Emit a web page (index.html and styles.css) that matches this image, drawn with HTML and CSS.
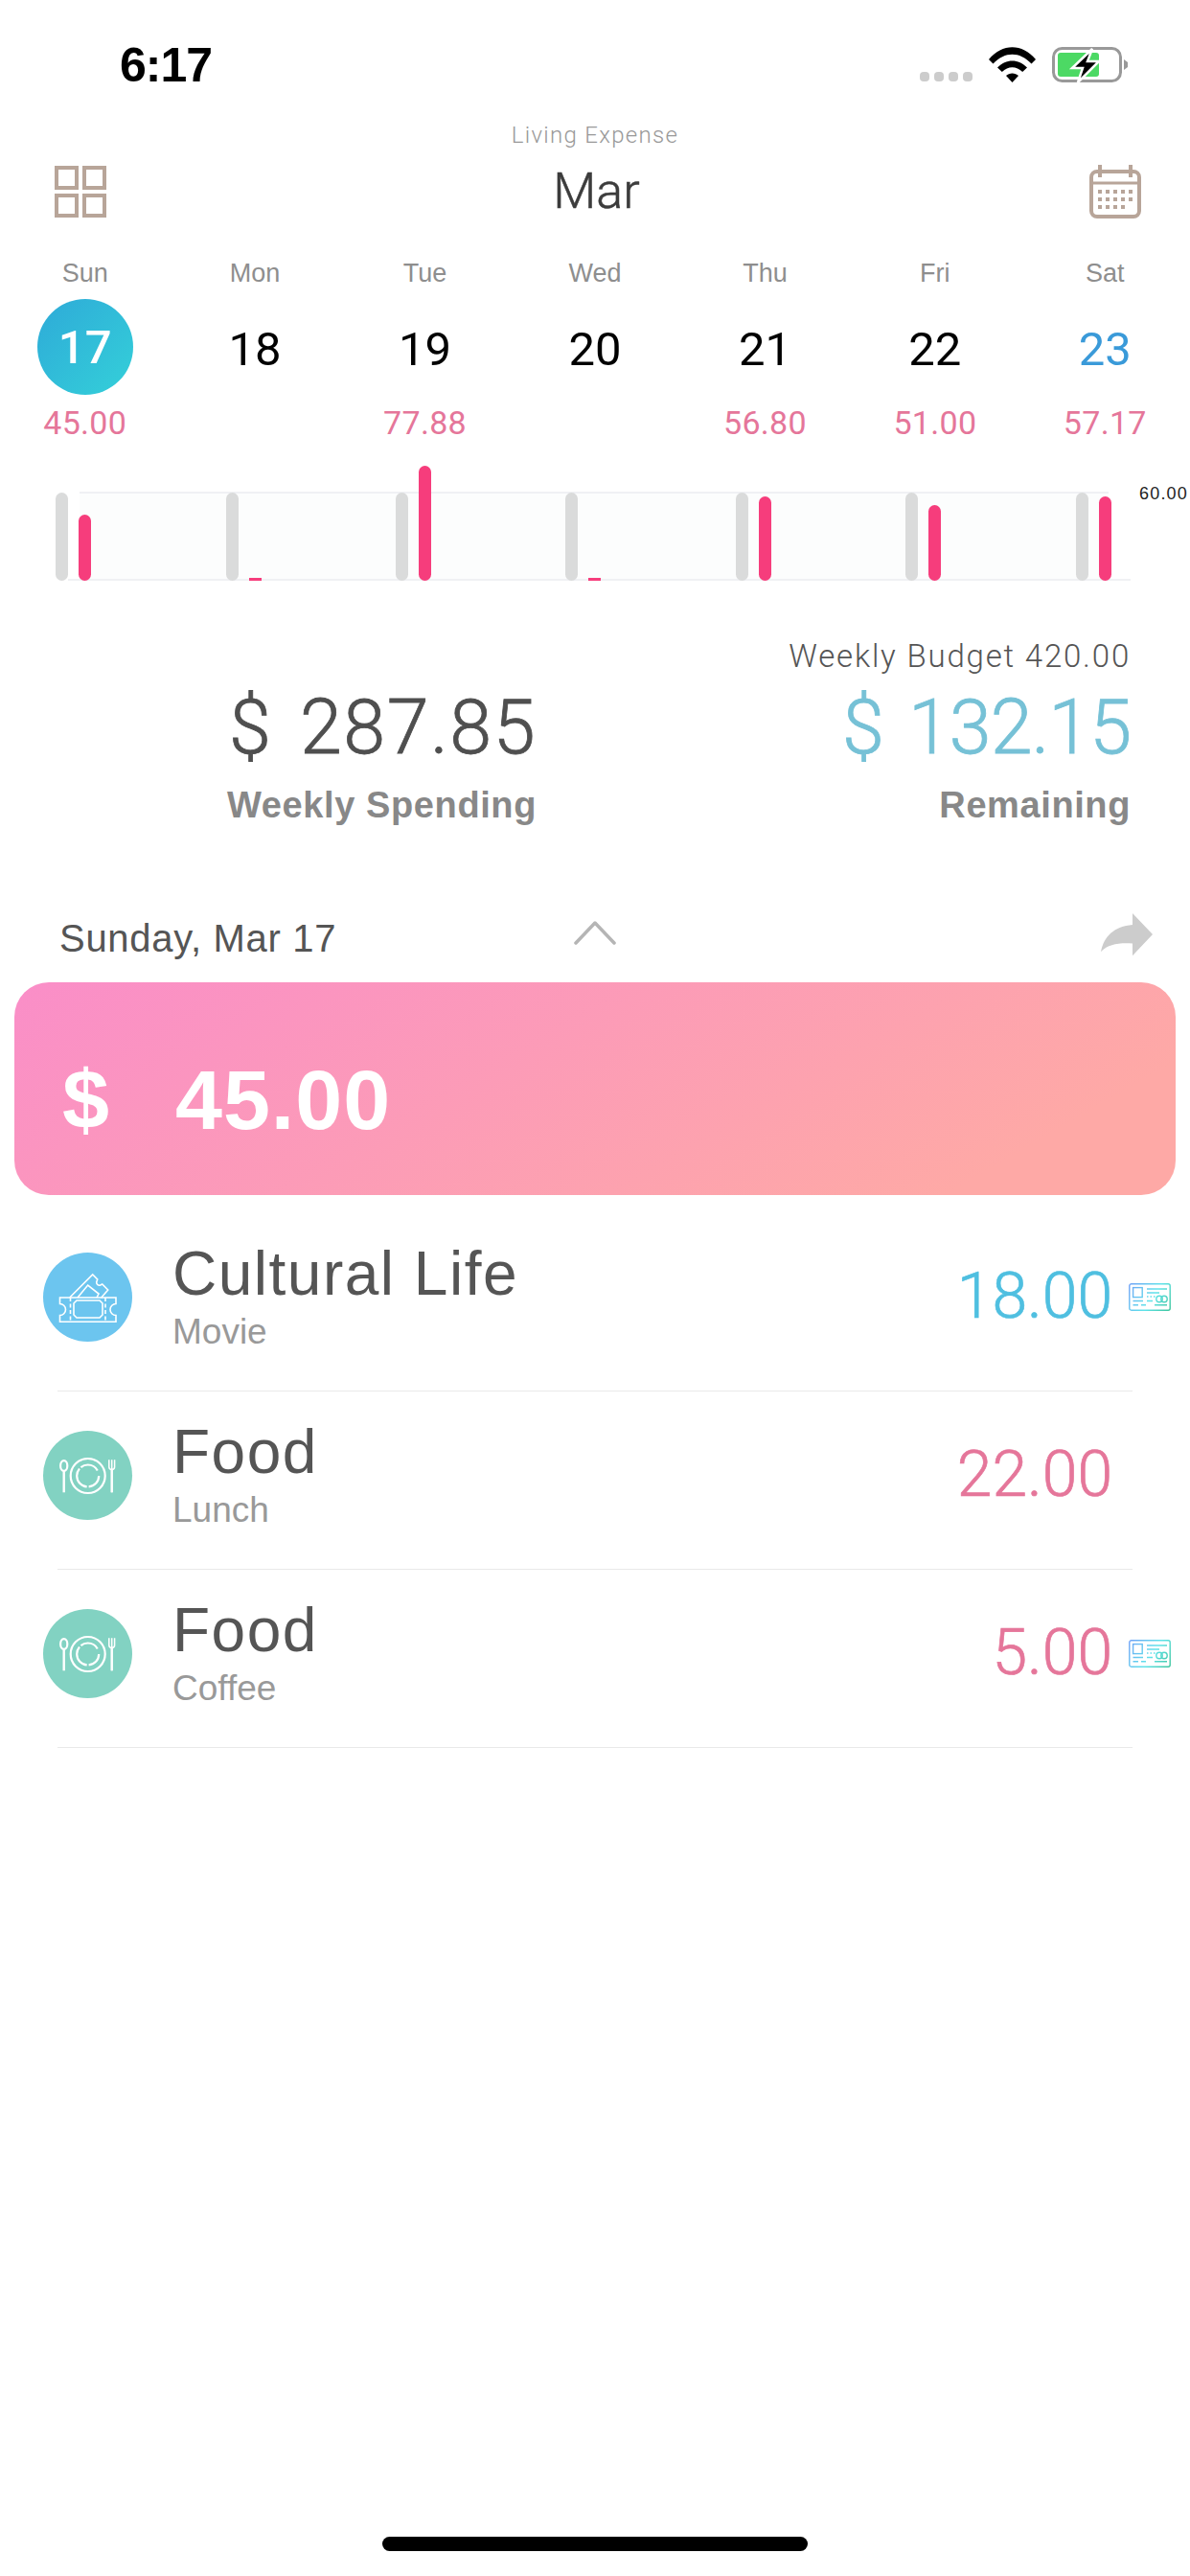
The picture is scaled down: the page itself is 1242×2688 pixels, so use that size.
FILE: index.html
```html
<!DOCTYPE html>
<html lang="en">
<head>
    <meta charset="UTF-8">
    <meta name="viewport" content="width=device-width, initial-scale=1.0">
    <title>Living Expense</title>
    <link rel="stylesheet" href="styles.css">
</head>
<body>
    <svg class="defs" width="0" height="0">
        <defs>
            <linearGradient id="cardGrad" gradientUnits="userSpaceOnUse" x1="0" y1="0" x2="44" y2="29">
                <stop offset="0" stop-color="#6f9ff8"/>
                <stop offset="0.55" stop-color="#5fe3ea"/>
                <stop offset="1" stop-color="#3cc49a"/>
            </linearGradient>
            <g id="payCard" fill="none" stroke="url(#cardGrad)" stroke-width="1.4">
                <rect x="0.8" y="0.8" width="42.4" height="27.4" rx="2"/>
                <rect x="4.6" y="4.6" width="9.6" height="10"/>
                <path d="M19 6h21M19 10h13M19 14h1.5M22.5 14h1.5M26 14h1.5M4.500 18.500h10.500M19 18.500h6M4.500 22.700h5.500M13 22.700h5M27 22.700h13"/>
                <circle cx="32" cy="16.500" r="3.200"/>
                <circle cx="37" cy="16.500" r="3.200"/>
            </g>
            <g id="plate" fill="none" stroke="#fff" stroke-width="2.200">
                <ellipse cx="21.700" cy="36.500" rx="3.600" ry="5.400"/>
                <path d="M21.700 42v22.300" stroke-width="2.400"/>
                <circle cx="46.700" cy="47" r="18"/>
                <circle cx="46.700" cy="47" r="11.500" stroke-dasharray="17 2 25 2 20 6"/>
                <path d="M68.800 30.300v7.500q0 2.700 2.900 2.700t2.900-2.700v-7.500M71.700 30.300v34" stroke-width="1.500"/>
                <path d="M71.700 40v24.300" stroke-width="2.400"/>
            </g>
        </defs>
    </svg>

    <div class="status">
        <span class="time">6:17</span>
        <div class="status-icons">
            <div class="signal"><i></i><i></i><i></i><i></i></div>
            <svg class="wifi" width="49" height="37" viewBox="0 0 49 37">
                <path d="M0 13C14-4 35-4 49 13l-4.500 4.500C32 4.500 17 4.500 4.500 17.500z"/>
                <path d="M9 21.500c9-9.500 22-9.500 31 0l-4.800 4.500c-6.500-6.500-15-6.500-21.400 0z"/>
                <path d="M18 30c3.500-3.500 9.500-3.500 13 0l-6.500 7z"/>
            </svg>
            <svg class="battery" width="79" height="37" viewBox="0 0 79 37">
                <rect x="1.500" y="1.500" width="70" height="34" rx="9" fill="none" stroke="#999" stroke-width="3"/>
                <path d="M75 13l4 3v5l-4 3z" fill="#999"/>
                <rect x="6" y="6" width="43" height="25" rx="3" fill="#4cd964"/>
                <path d="M42 2L21 22h11l-5 15 22-22H37z" fill="#000" stroke="#fff" stroke-width="2.500"/>
            </svg>
        </div>
    </div>

    <div class="book-name">Living Expense</div>
    <div class="header">
        <svg width="54" height="54" viewBox="0 0 54 54" fill="none" stroke="#b8a599" stroke-width="4">
            <rect x="2" y="2" width="21" height="21"/>
            <rect x="31" y="2" width="21" height="21"/>
            <rect x="2" y="31" width="21" height="21"/>
            <rect x="31" y="31" width="21" height="21"/>
        </svg>
        <span class="month">Mar</span>
        <svg width="54" height="56" viewBox="0 0 54 56">
            <rect x="2" y="7" width="50" height="47" rx="6" fill="none" stroke="#b8a599" stroke-width="4"/>
            <path d="M2 19h50" stroke="#b8a599" stroke-width="3"/>
            <path d="M11 0v13M43 0v13" stroke="#b8a599" stroke-width="4"/>
            <path d="M9 26h4v4H9zM17 26h4v4h-4zM25 26h4v4h-4zM33 26h4v4h-4zM41 26h4v4h-4zM9 34h4v4H9zM17 34h4v4h-4zM25 34h4v4h-4zM33 34h4v4h-4zM41 34h4v4h-4zM9 42h4v4H9zM17 42h4v4h-4zM25 42h4v4h-4zM33 42h4v4h-4z" fill="#b8a599"/>
        </svg>
    </div>

    <div class="week">
        <div class="day">
            <span class="day-name">Sun</span>
            <span class="day-num today">17</span>
            <span class="day-amount">45.00</span>
        </div>
        <div class="day">
            <span class="day-name">Mon</span>
            <span class="day-num">18</span>
            <span class="day-amount"></span>
        </div>
        <div class="day">
            <span class="day-name">Tue</span>
            <span class="day-num">19</span>
            <span class="day-amount">77.88</span>
        </div>
        <div class="day">
            <span class="day-name">Wed</span>
            <span class="day-num">20</span>
            <span class="day-amount"></span>
        </div>
        <div class="day">
            <span class="day-name">Thu</span>
            <span class="day-num">21</span>
            <span class="day-amount">56.80</span>
        </div>
        <div class="day">
            <span class="day-name">Fri</span>
            <span class="day-num">22</span>
            <span class="day-amount">51.00</span>
        </div>
        <div class="day">
            <span class="day-name">Sat</span>
            <span class="day-num weekend">23</span>
            <span class="day-amount">57.17</span>
        </div>
    </div>

    <div class="chart">
        <div class="chart-band"></div>
        <span class="chart-max">60.00</span>
        <div class="bars"><i class="budget"></i><i class="spent" style="height: 69px"></i></div>
        <div class="bars"><i class="budget"></i><i class="spent flat" style="height: 3px"></i></div>
        <div class="bars"><i class="budget"></i><i class="spent" style="height: 120px"></i></div>
        <div class="bars"><i class="budget"></i><i class="spent flat" style="height: 3px"></i></div>
        <div class="bars"><i class="budget"></i><i class="spent" style="height: 88px"></i></div>
        <div class="bars"><i class="budget"></i><i class="spent" style="height: 79px"></i></div>
        <div class="bars"><i class="budget"></i><i class="spent" style="height: 88px"></i></div>
    </div>

    <div class="summary">
        <div class="budget-line">Weekly Budget 420.00</div>
        <div class="totals">
            <div class="total total-left">
                <div class="total-value">$ 287.85</div>
                <div class="total-label">Weekly Spending</div>
            </div>
            <div class="total total-right">
                <div class="total-value blue">$ 132.15</div>
                <div class="total-label">Remaining</div>
            </div>
        </div>
    </div>

    <div class="day-head">
        <span class="day-title">Sunday, Mar 17</span>
        <svg class="chevron" width="44" height="25" viewBox="0 0 44 25" fill="none" stroke="#b5b5b5" stroke-width="3.500" stroke-linecap="round" stroke-linejoin="round">
            <path d="M2 23L22 2l20 21"/>
        </svg>
        <svg class="share" width="54" height="44" viewBox="0 0 54 44" fill="#ccc">
            <path d="M33 0l21 26-21 26V37C18 36 8 38 0 47 3 28 14 16 33 14z" transform="scale(1 0.85)"/>
        </svg>
    </div>

    <div class="day-card">
        <span class="card-sign">$</span>
        <span class="card-value">45.00</span>
    </div>

    <div class="list">
        <div class="row">
            <div class="cat-icon cat-blue">
                <svg width="93" height="93" viewBox="0 0 93 93" fill="none" stroke="#fff" stroke-width="1.600">
                    <path d="M17.500 47h58.500v6.500a6 6 0 0 0 0 12v6.800H17.500v-6.800a6 6 0 0 0 0-12z"/>
                    <path d="M28.500 47v25.300M65 47v25.300" stroke-dasharray="4 2.500"/>
                    <path d="M35 50h24l3 3v12l-3 3H35l-3-3V53z"/>
                    <path d="M27.700 47l24-24 5 5-1 3a3 3 0 0 0 4 3l2-1 6 6-7 8"/>
                    <path d="M36 47l10.700-13 11.300 9-2 4"/>
                </svg>
            </div>
            <div class="row-text">
                <div class="row-title">Cultural Life</div>
                <div class="row-sub">Movie</div>
            </div>
            <div class="row-amount blue">18.00</div>
            <div class="pay-slot"><svg width="44" height="29" viewBox="0 0 44 29"><use href="#payCard"/></svg></div>
        </div>
        <div class="row">
            <div class="cat-icon cat-green">
                <svg width="93" height="93" viewBox="0 0 93 93"><use href="#plate"/></svg>
            </div>
            <div class="row-text">
                <div class="row-title">Food</div>
                <div class="row-sub">Lunch</div>
            </div>
            <div class="row-amount">22.00</div>
            <div class="pay-slot"></div>
        </div>
        <div class="row">
            <div class="cat-icon cat-green">
                <svg width="93" height="93" viewBox="0 0 93 93"><use href="#plate"/></svg>
            </div>
            <div class="row-text">
                <div class="row-title">Food</div>
                <div class="row-sub">Coffee</div>
            </div>
            <div class="row-amount">5.00</div>
            <div class="pay-slot"><svg width="44" height="29" viewBox="0 0 44 29"><use href="#payCard"/></svg></div>
        </div>
    </div>

    <div class="home-bar"></div>
</body>
</html>
```

FILE: styles.css
```css
* {
    box-sizing: border-box;
}

html, body {
    margin: 0;
    padding: 0;
}

body {
    width: 1242px;
    height: 2688px;
    overflow: hidden;
    display: flex;
    flex-direction: column;
    background-color: #fff;
    font-family: "Liberation Sans", Arial, sans-serif;
    color: #555;
}

.defs {
    position: absolute;
}

/* status bar */
.status {
    height: 127px;
    padding: 49px 65px 0 125px;
    display: flex;
    justify-content: space-between;
    align-items: flex-start;
}

.time {
    font-size: 50px;
    font-weight: bold;
    line-height: 38px;
    letter-spacing: -1px;
    color: #000;
}

.status-icons {
    display: flex;
    align-items: flex-start;
    gap: 17px;
}

.signal {
    display: flex;
    gap: 5px;
    margin-top: 26px;
}

.signal i {
    width: 10px;
    height: 10px;
    border-radius: 4px;
    background-color: #ccc;
}

/* header */
.book-name {
    text-align: center;
    font-family: Roboto, "Liberation Sans", sans-serif;
    font-weight: 300;
    font-size: 24px;
    line-height: 28px;
    letter-spacing: 1.3px;
    color: #999;
}

.header {
    height: 70px;
    margin-top: 10px;
    padding: 0 51px 0 57px;
    display: flex;
    justify-content: space-between;
    align-items: center;
}

.month {
    margin-right: 3px;
    font-family: Roboto, "Liberation Sans", sans-serif;
    font-weight: 300;
    font-size: 52px;
    line-height: 60px;
    color: #3c3c3c;
    -webkit-text-stroke: 0.5px #3c3c3c;
}

/* week strip */
.week {
    margin-top: 34px;
    display: grid;
    grid-template-columns: repeat(7, 1fr);
}

.day {
    display: flex;
    flex-direction: column;
    align-items: center;
}

.day-name {
    font-size: 27px;
    line-height: 32px;
    color: #8e8e8e;
}

.day-num {
    width: 100px;
    height: 100px;
    margin-top: 11px;
    padding-top: 4px;
    border-radius: 50%;
    display: flex;
    justify-content: center;
    align-items: center;
    font-family: Roboto, "Liberation Sans", sans-serif;
    font-weight: 400;
    font-size: 49px;
    color: #000;
}

.day-num.today {
    padding-top: 0;
    color: #fff;
    font-weight: 500;
    background: linear-gradient(135deg, #2eaad8, #34d0d9);
}

.day-num.weekend {
    color: #3a9ad9;
}

.day-amount {
    height: 40px;
    margin-top: 9px;
    font-family: Roboto, "Liberation Sans", sans-serif;
    font-weight: 400;
    font-size: 34px;
    line-height: 40px;
    letter-spacing: 0.3px;
    color: #e5769a;
}

/* chart */
.chart {
    position: relative;
    height: 120px;
    margin-top: 25px;
    display: grid;
    grid-template-columns: repeat(7, 1fr);
}

.chart-band {
    position: absolute;
    left: 83px;
    right: 85px;
    top: 27px;
    bottom: 0;
    border-top: 2px solid #f0f1f4;
    background-color: #fcfdfd;
}

.chart::after {
    content: "";
    position: absolute;
    left: 71px;
    right: 62px;
    bottom: 0;
    height: 2px;
    background-color: #f0f1f4;
}

.chart-max {
    position: absolute;
    left: 1189px;
    top: 19px;
    font-size: 18px;
    line-height: 20px;
    letter-spacing: 1.2px;
    color: #222;
}

.bars {
    position: relative;
    z-index: 1;
    padding-right: 24px;
    display: flex;
    justify-content: center;
    align-items: flex-end;
    gap: 11px;
}

.bars i {
    width: 13px;
    border-radius: 7px;
}

.budget {
    height: 92px;
    background-color: #dadbdb;
}

.spent {
    background-color: #f63d7c;
}

.spent.flat {
    border-radius: 0;
}

/* weekly totals */
.summary {
    margin-top: 59px;
    padding-right: 62px;
}

.budget-line {
    text-align: right;
    font-family: Roboto, "Liberation Sans", sans-serif;
    font-weight: 300;
    font-size: 33px;
    line-height: 40px;
    letter-spacing: 1.8px;
    color: #555;
}

.totals {
    margin-top: 9px;
    display: flex;
    text-align: right;
}

.total-left {
    width: 560px;
}

.total-right {
    flex: 1;
}

.total-value {
    font-family: Roboto, "Liberation Sans", sans-serif;
    font-weight: 300;
    font-size: 79px;
    line-height: 90px;
    letter-spacing: 1.5px;
    word-spacing: 8px;
    color: #4f4f4f;
    -webkit-text-stroke: 0.8px #4f4f4f;
}

.total-value.blue {
    color: #76c1d6;
    letter-spacing: -1px;
    -webkit-text-stroke: 0.8px #76c1d6;
}

.total-label {
    margin-top: 14px;
    font-size: 38px;
    font-weight: bold;
    line-height: 44px;
    letter-spacing: 0.6px;
    color: #888;
}

/* selected day */
.day-head {
    height: 58px;
    margin-top: 88px;
    padding: 0 39px 0 62px;
    display: grid;
    grid-template-columns: 1fr auto 1fr;
    align-items: center;
}

.day-title {
    font-size: 40px;
    line-height: 48px;
    letter-spacing: 0.7px;
    color: #555;
}

.chevron {
    margin-right: 23px;
    margin-bottom: 12px;
}

.share {
    justify-self: end;
    margin-bottom: 8px;
}

.day-card {
    height: 222px;
    margin: 17px 15px 0;
    padding: 24px 0 0 50px;
    display: flex;
    align-items: center;
    gap: 68px;
    border-radius: 36px;
    background: linear-gradient(150deg, #fa8ec8, #fea9a6 85%);
    color: #fff;
    font-size: 88px;
    font-weight: bold;
    letter-spacing: 1px;
}

/* expense list */
.list {
    margin-top: 19px;
}

.row {
    height: 186px;
    margin: 0 60px;
    padding-bottom: 11px;
    display: flex;
    align-items: center;
    border-bottom: 1px solid #e9e9e9;
}

.cat-icon {
    width: 93px;
    height: 93px;
    margin-left: -15px;
    border-radius: 50%;
}

.cat-blue {
    background-color: #6cc5ef;
}

.cat-green {
    background-color: #82d2c2;
}

.row-text {
    margin-left: 42px;
}

.row-title {
    font-size: 64px;
    line-height: 70px;
    letter-spacing: 1.5px;
    color: #555;
}

.row-sub {
    margin-top: 4px;
    font-size: 37px;
    line-height: 44px;
    color: #999;
}

.row-amount {
    margin-left: auto;
    font-family: Roboto, "Liberation Sans", sans-serif;
    font-weight: 300;
    font-size: 66px;
    line-height: 80px;
    color: #e5769a;
    -webkit-text-stroke: 0.7px #e5769a;
}

.row-amount.blue {
    color: #4fbfe0;
    -webkit-text-stroke: 0.7px #4fbfe0;
}

.pay-slot {
    width: 44px;
    height: 29px;
    margin-left: 17px;
    margin-right: -40px;
}

.home-bar {
    width: 444px;
    height: 15px;
    margin: auto auto 26px;
    border-radius: 8px;
    background-color: #000;
}
```
